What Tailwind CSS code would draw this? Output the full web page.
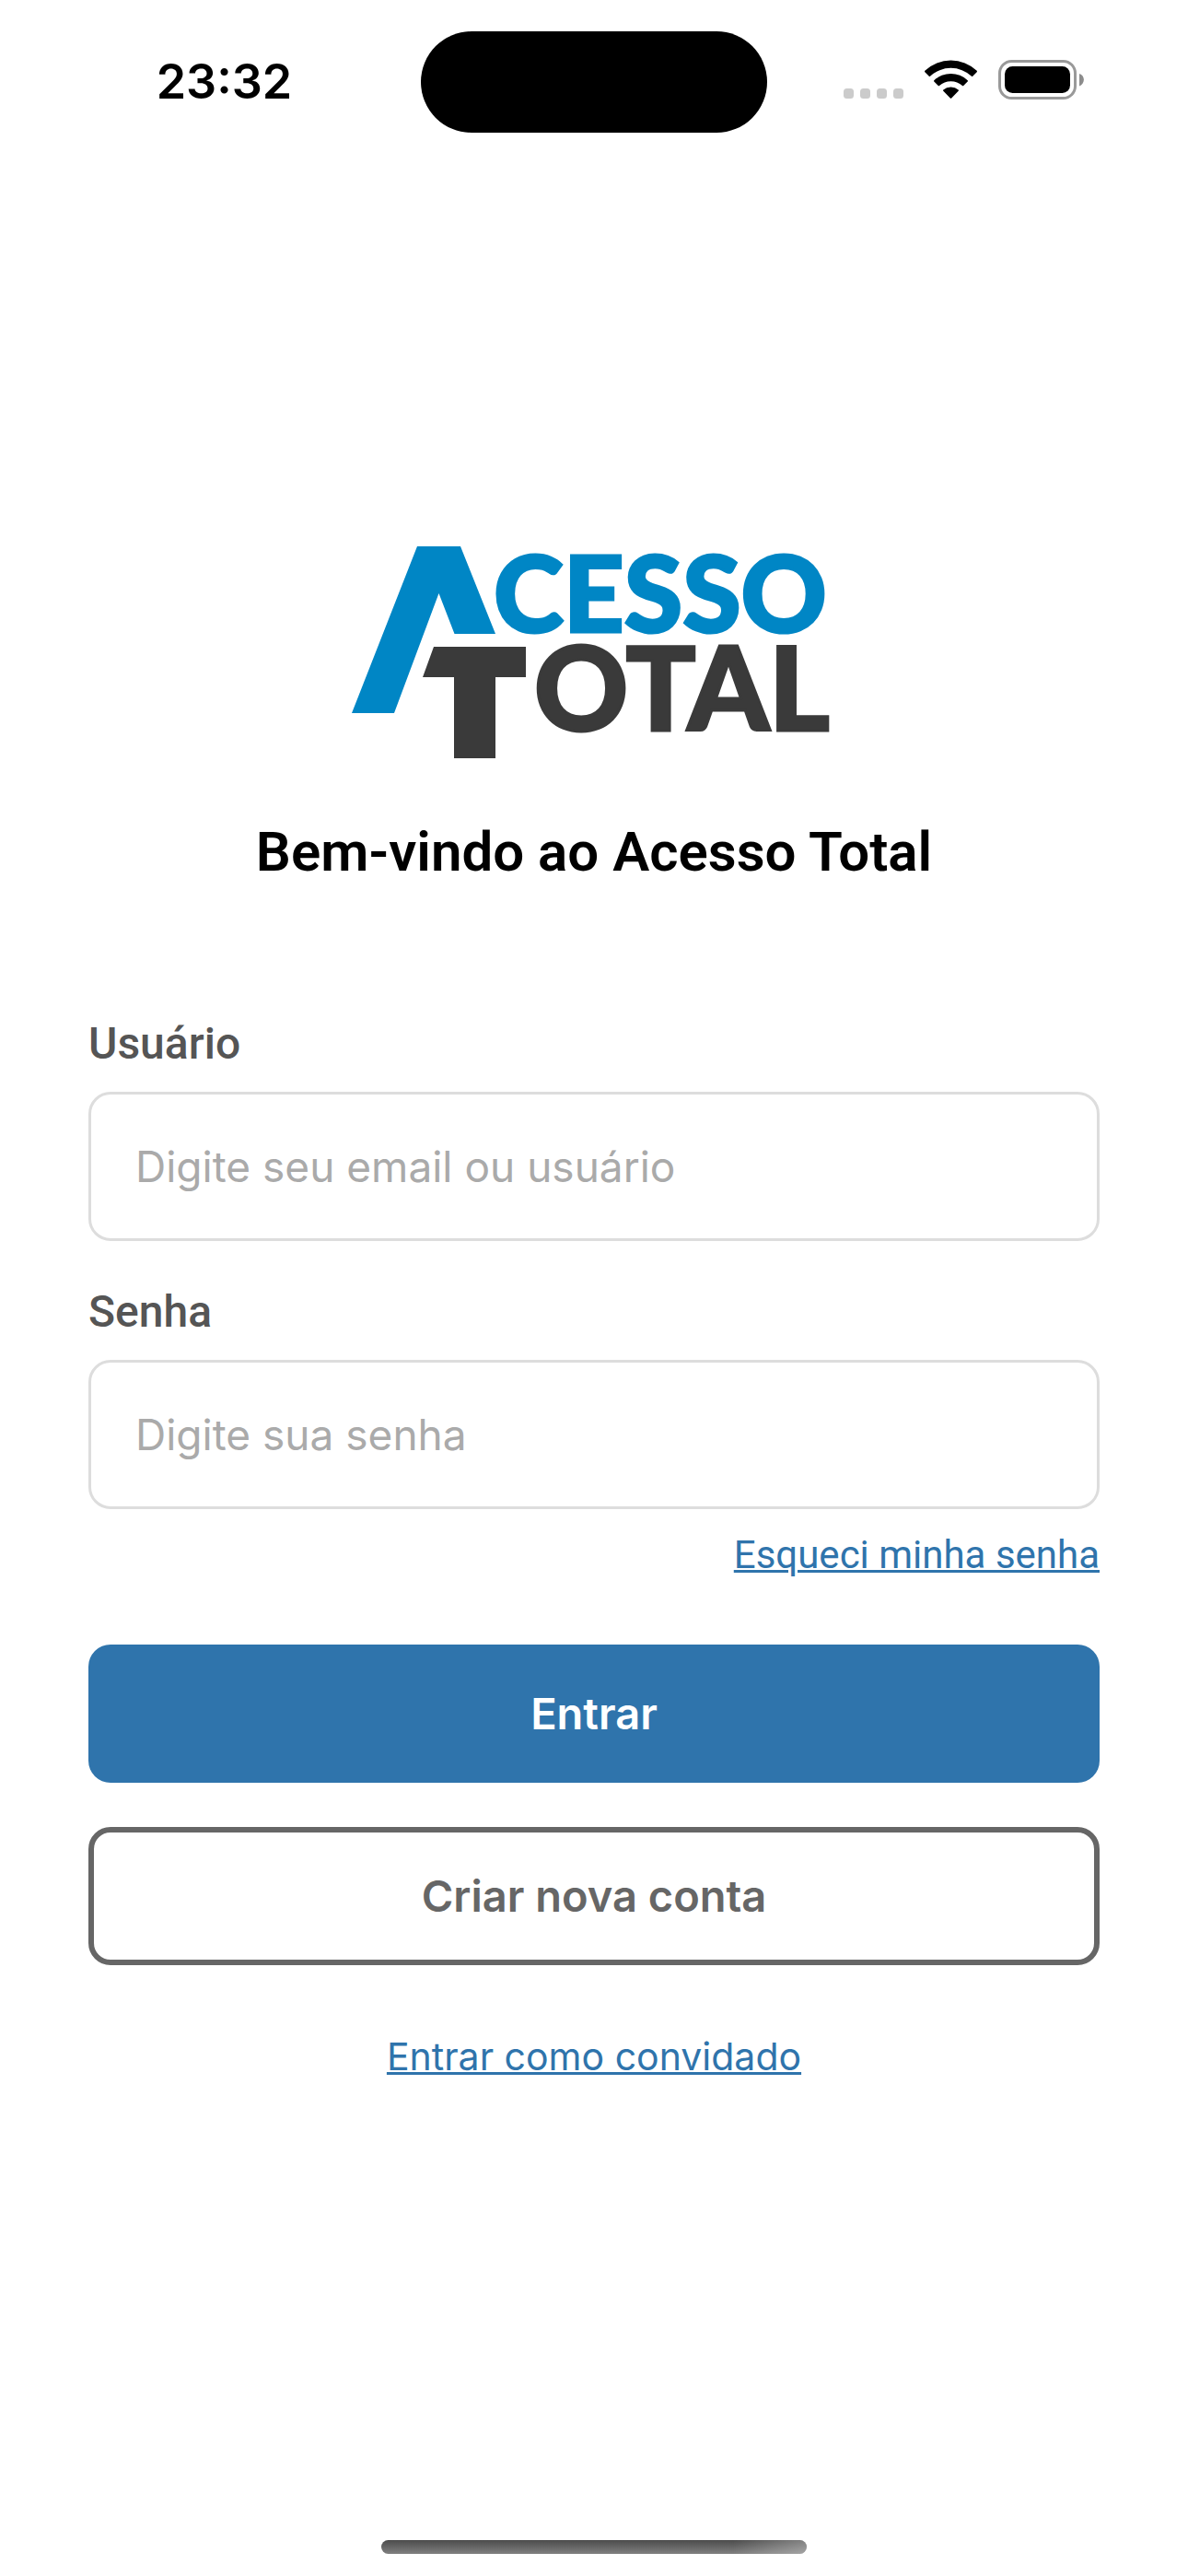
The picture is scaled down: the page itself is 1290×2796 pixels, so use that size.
<!DOCTYPE html>
<html lang="pt-BR">
<head>
<meta charset="utf-8">
<meta name="viewport" content="width=device-width, initial-scale=1">
<title>Acesso Total</title>
<script src="https://cdn.jsdelivr.net/npm/@tailwindcss/browser@4"></script>
</head>
<body class="flex min-h-screen flex-col bg-white font-['Roboto',sans-serif] text-black">
  <header class="grid grid-cols-[1fr_376px_1fr] pt-[34px]">
    <div class="flex h-[110px] items-center justify-center pl-[30px]">
      <time class="font-['Inter',sans-serif] text-[52px] font-semibold leading-[64px]">23:32</time>
    </div>
    <div class="h-[110px] rounded-full bg-black"></div>
    <div class="flex h-[110px] items-start justify-end pt-[31px] pr-[113px]">
      <svg class="h-[43px] w-[261px]" viewBox="0 0 261 43" aria-hidden="true">
        <g fill="#cbcbcb">
          <rect x="0" y="31" width="11" height="11" rx="3.5"/>
          <rect x="18" y="31" width="11" height="11" rx="3.5"/>
          <rect x="36" y="31" width="11" height="11" rx="3.5"/>
          <rect x="54" y="31" width="11" height="11" rx="3.5"/>
        </g>
        <path d="M88.300 11.800A41 41 0 0 1 144.700 11.800Q145.300 12.600 144.700 13.200L140.200 17.700Q139.600 18.200 139 17.700A33 33 0 0 0 94 17.700Q93.400 18.200 92.800 17.700L88.300 13.200Q87.700 12.600 88.300 11.800Z"/>
        <path d="M98.300 22.200A26.500 26.500 0 0 1 134.700 22.200Q135.300 22.900 134.700 23.500L130.200 28Q129.600 28.500 129 28A18.500 18.500 0 0 0 104 28Q103.400 28.500 102.800 28L98.300 23.500Q97.700 22.900 98.300 22.200Z"/>
        <path d="M108.300 32.500A12.500 12.500 0 0 1 124.700 32.500Q125.300 33.200 124.700 33.800L117.200 41.400Q116.500 42 115.800 41.400L108.300 33.800Q107.700 33.200 108.300 32.500Z"/>
        <rect x="169.500" y="1.500" width="82" height="40" rx="13" fill="none" stroke="#999" stroke-width="3"/>
        <rect x="175" y="7" width="71" height="29" rx="8.500"/>
        <path d="M256 15C262.500 17 262.500 26 256 28.500Z" fill="#8c8c8c"/>
      </svg>
    </div>
  </header>

  <main class="flex flex-1 flex-col px-24 pt-[449px]">
    <svg class="h-[231px] w-[526px] self-center overflow-visible" viewBox="382 593 526 231" role="img" aria-label="Acesso Total">
      <path fill="#0086c5" d="M453 593H500L538 688H493.500L476.500 644L428 774H382Z"/>
      <path fill="#3a3a3a" d="M471 702H571V735H538V823H493V735H459Z"/>
      <text class="font-['Lato',sans-serif] text-[115px] font-black" x="536" y="686" fill="#0086c5" stroke="#0086c5" stroke-width="3">CESSO</text>
      <text class="font-['Lato',sans-serif] text-[126px] font-black" x="580" y="793" fill="#3a3a3a" stroke="#3a3a3a" stroke-width="3">OTAL</text>
    </svg>

    <h1 class="mt-16 text-center text-[60px] font-semibold leading-[74px]">Bem-vindo ao Acesso Total</h1>

    <form class="mt-[142px] flex flex-col">
      <label for="user" class="text-[48px] font-medium leading-[57px] text-[#555]">Usuário</label>
      <input id="user" type="text" placeholder="Digite seu email ou usuário" class="mt-6 h-[162px] w-full rounded-3xl border-3 border-[#ddd] px-12 font-['Inter',sans-serif] text-[46px] placeholder:text-[#aaa]">

      <label for="password" class="mt-12 text-[48px] font-medium leading-[57px] text-[#555]">Senha</label>
      <input id="password" type="password" placeholder="Digite sua senha" class="mt-6 h-[162px] w-full rounded-3xl border-3 border-[#ddd] px-12 font-['Inter',sans-serif] text-[46px] placeholder:text-[#aaa]">

      <a href="#" class="mt-6 self-end text-[42px] leading-[51px] text-[#2f74ac] underline decoration-3">Esqueci minha senha</a>

      <button type="submit" class="mt-18 h-[150px] w-full rounded-3xl bg-[#2f74ac] font-['Inter',sans-serif] text-[47px] font-semibold text-white">Entrar</button>
      <button type="button" class="mt-12 h-[150px] w-full rounded-3xl border-6 border-[#666] font-['Inter',sans-serif] text-[47px] font-semibold text-[#666]">Criar nova conta</button>

      <a href="#" class="mt-[74px] self-center font-['Inter',sans-serif] text-[41px] leading-[51px] text-[#2f74ac] underline decoration-3">Entrar como convidado</a>
    </form>
  </main>

  <footer class="flex justify-center pb-6">
    <div class="h-[15px] w-[462px] overflow-hidden rounded-full bg-linear-to-b from-[#4c4c4c] to-[#808080]">
      <div class="ml-auto h-full w-20 bg-linear-to-r from-transparent to-white/30"></div>
    </div>
  </footer>
</body>
</html>
